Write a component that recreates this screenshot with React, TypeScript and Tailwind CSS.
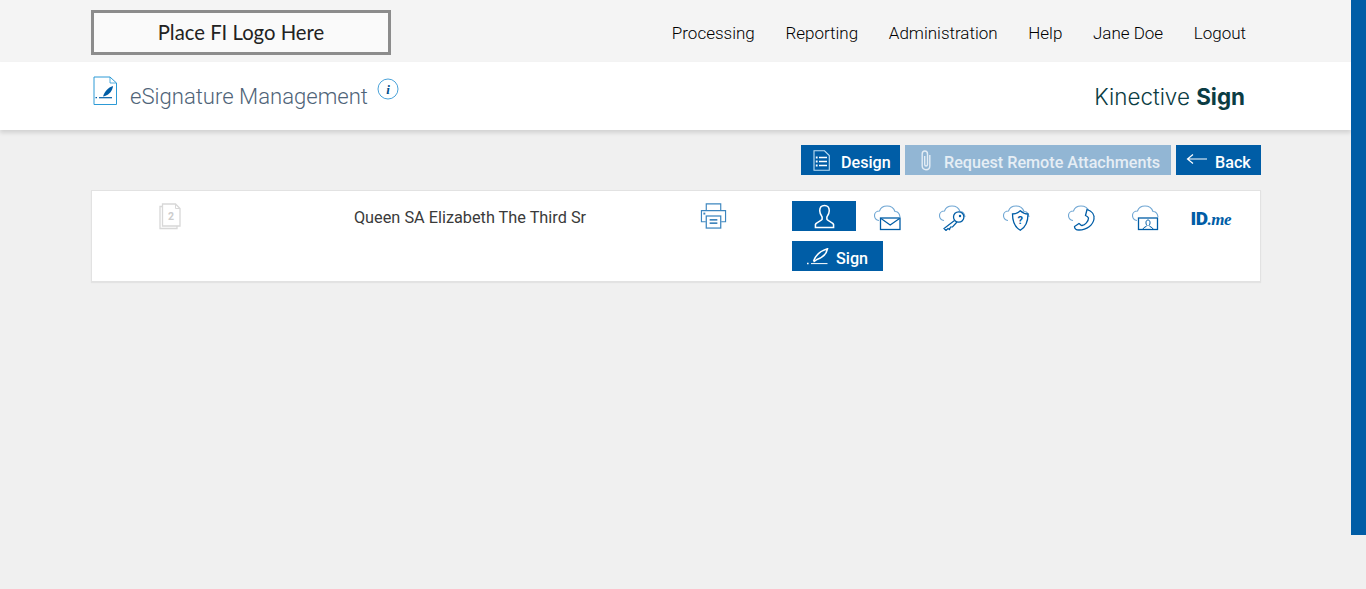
const navItems = ['Processing', 'Reporting', 'Administration', 'Help', 'Jane Doe', 'Logout'];

const BLUE = '#005DA6';

function SignDocIcon() {
  return (
    <svg width="26" height="30" viewBox="0 0 26 30" fill="none">
      <path d="M2 1H18L24.5 7V28.5H2Z" stroke="#2C9AD6" strokeWidth="1" />
      <path d="M18 1V7H24.5" stroke="#2C9AD6" strokeWidth="0.8" />
      <path d="M11 20.5C12.5 15.5 16 11.5 21 10C20.5 14.5 17.5 18.5 13 20Z" fill="#005DA6" />
      <path d="M7 21.7H20" stroke="#005DA6" strokeWidth="1.2" />
      <path d="M3.5 21.7H5" stroke="#005DA6" strokeWidth="1.2" />
    </svg>
  );
}

function DesignIcon() {
  return (
    <svg width="17" height="21" viewBox="0 0 17 21" fill="none" stroke="white">
      <path d="M1 .8H11.5L16.3 5.5V20.2H1Z" strokeWidth="1.1" stroke="#BFE0F5" />
      <path d="M6 7.5H14M6 11.5H14M6 15.5H14" strokeWidth="1.5" />
      <path d="M2.8 7.5H4.6M2.8 11.5H4.6M2.8 15.5H4.6" strokeWidth="1.8" />
    </svg>
  );
}

function ClipIcon() {
  return (
    <svg width="10" height="21" viewBox="0 0 10 21" fill="none" stroke="#E4EDF5" strokeWidth="1.4">
      <path d="M8.8 5V16C8.8 21 1.2 21 1.2 16V4C1.2 0 6.5 0 6.5 4V14.5C6.5 16.5 3.7 16.5 3.7 14.5V6" />
    </svg>
  );
}

function BackArrow() {
  return (
    <svg width="21" height="10" viewBox="0 0 21 10" fill="none" stroke="white" strokeWidth="1.2">
      <path d="M21 5H1.5M7 .5L1.5 5L7 9.5" />
    </svg>
  );
}

function PersonIcon() {
  return (
    <svg width="21" height="25" viewBox="0 0 22 26" fill="none" stroke="white" strokeWidth="1.6">
      <path d="M11 1.5C7.5 1.5 6 4 6 7C6 10 7.5 12 8.5 13.5V16C8 17.5 2.5 18.5 1.5 21.5V24.5H20.5V21.5C19.5 18.5 14 17.5 13.5 16V13.5C14.5 12 16 10 16 7C16 4 14.5 1.5 11 1.5Z" />
    </svg>
  );
}

function QuillIcon() {
  return (
    <svg width="23" height="17" viewBox="0 0 23 17" fill="none" stroke="white">
      <path d="M7.5 13C9.5 7.5 14 3 21.5 .8C20.5 6 16.5 9.5 11 11.5L7.5 14" strokeWidth="1.5" />
      <path d="M5 15.6H21.5" strokeWidth="1" />
      <path d="M1 15.6H2.6" strokeWidth="1.5" />
    </svg>
  );
}

// shared cloud outline, the overlay sits in the lower right of the 28x26 box
function Cloud() {
  return (
    <path
      d="M5 15.5C2 15.5 .5 13 .5 10.5C.5 8 2.5 6 5.5 6C6.5 3 9.5 1 13 1C17 1 20 3.5 21 6.5C23.5 6.5 25.5 8.5 26 12"
      stroke="#6FA6D3"
      strokeWidth="1.1"
      fill="none"
    />
  );
}

function CloudMail() {
  return (
    <svg width="28" height="26" viewBox="0 0 28 26" fill="none">
      <Cloud />
      <rect x="6.5" y="13" width="19.5" height="11.5" fill="white" stroke={BLUE} strokeWidth="1.3" />
      <path d="M7 13.5L16.2 20L25.5 13.5" stroke={BLUE} strokeWidth="1.2" />
    </svg>
  );
}

function CloudKey() {
  return (
    <svg width="28" height="26" viewBox="0 0 28 26" fill="none">
      <Cloud />
      <path d="M15.5 15.5L5 23.5L7 25.5L9 23.5L10.5 24.5L11.5 22L13.5 22L18 17" fill="white" stroke={BLUE} strokeWidth="1.2" />
      <circle cx="19.7" cy="12" r="5.2" fill="white" stroke={BLUE} strokeWidth="1.3" />
      <circle cx="21" cy="11" r="1.2" fill={BLUE} />
    </svg>
  );
}

function CloudShield() {
  return (
    <svg width="28" height="26" viewBox="0 0 28 26" fill="none">
      <Cloud />
      <path d="M9.5 9C13 9 15.5 7.5 17.3 5.8C19 7.5 21.5 9 25 9C25 16 23 22 17.3 25.3C11.5 22 9.5 16 9.5 9Z" fill="white" stroke={BLUE} strokeWidth="1.3" />
      <text x="17.3" y="19" textAnchor="middle" fontSize="11" fontWeight="700" fill={BLUE} fontFamily="Roboto, sans-serif">?</text>
    </svg>
  );
}

function CloudPhone() {
  return (
    <svg width="28" height="26" viewBox="0 0 28 26" fill="none">
      <Cloud />
      <path d="M19 4.5C24 6 26.5 10 26 14C25 20 19 25 11 25C8 25 6.5 23.5 6.5 21.5L11 18.5C12 19 13 20.5 14 20.5C17 20 20.5 16.5 20.5 13C20 12 18.5 11 17.5 10.5Z" fill="white" stroke={BLUE} strokeWidth="1.3" />
    </svg>
  );
}

function CloudVideo() {
  return (
    <svg width="28" height="26" viewBox="0 0 28 26" fill="none">
      <Cloud />
      <rect x="6.5" y="13" width="19" height="11.5" fill="white" stroke={BLUE} strokeWidth="1.3" />
      <path d="M11 24C11.5 22 14.5 22 15 20.5C13.5 19 13.5 15 16 15C18.5 15 18.5 19 17 20.5C17.5 22 20.5 22 21 24" stroke={BLUE} strokeWidth="1" />
    </svg>
  );
}

function PrinterIcon() {
  return (
    <svg width="27" height="28" viewBox="0 0 28 28" fill="none">
      <path d="M6.5 8V1.5H21.5V8" stroke="#3D86BF" strokeWidth="1.2" />
      <path d="M6 20H1.5V8.5H26.5V20H22" stroke="#3D86BF" strokeWidth="1.2" />
      <rect x="6.5" y="14" width="15" height="12.5" fill="white" stroke="#3D86BF" strokeWidth="1.3" />
      <path d="M10 18H18M10 21.5H18" stroke={BLUE} strokeWidth="1.3" />
      <rect x="3.5" y="10.5" width="2" height="2" fill="#3D86BF" />
    </svg>
  );
}

function PagesIcon() {
  return (
    <svg width="22" height="27" viewBox="0 0 22 27" fill="none" stroke="#D8D8D8">
      <path d="M3 3.5H1V25.5H18V23" strokeWidth="1.3" />
      <path d="M3.5 1H16.5L21 5.5V23H3.5Z" strokeWidth="1.3" fill="white" />
      <path d="M16.5 1V5.5H21" strokeWidth="1" />
      <text x="12" y="16.5" textAnchor="middle" fontSize="10.5" fontWeight="700" fill="#CCCCCC" stroke="none" fontFamily="Roboto, sans-serif">2</text>
    </svg>
  );
}

function InfoIcon() {
  return (
    <svg width="22" height="22" viewBox="0 0 22 22" fill="none">
      <circle cx="11" cy="11" r="10" stroke="#4BA3D9" strokeWidth="1" />
      <text x="11" y="15.5" textAnchor="middle" fontSize="13" fontWeight="700" fontStyle="italic" fill="#004E8C" fontFamily="'Liberation Serif', serif">i</text>
    </svg>
  );
}

const verifyIcons = [CloudMail, CloudKey, CloudShield, CloudPhone, CloudVideo];

export default function App() {
  return (
    <div className="flex min-h-[589px] bg-[#f0f0f0] font-['Roboto',sans-serif]">
      <div className="w-[1351px] shrink-0">
        <header className="flex h-[62px] items-start justify-between bg-[#f4f4f4] pl-[91px] pr-[105px] pt-[10px]">
          <div className="flex h-[45px] w-[300px] items-center justify-center border-[3px] border-[#8c8c8c] bg-[#fafafa] pb-[1px] font-['Lato',sans-serif] text-[20.3px] font-normal text-[#222]">
            Place FI Logo Here
          </div>
          <nav className="mt-[13px] flex gap-[30.6px] text-[17px] leading-[20px] font-light text-black">
            {navItems.map((item) => (
              <a key={item}>{item}</a>
            ))}
          </nav>
        </header>

        <div className="flex h-[68px] items-center justify-between bg-white pl-[91px] pr-[106px] pt-[2px] shadow-[0_3px_4px_rgba(0,0,0,0.12)]">
          <div className="flex items-start">
            <div className="-mt-[6px] ml-px">
              <SignDocIcon />
            </div>
            <h1 className="ml-[12px] -mt-[2px] text-[22.1px] leading-[32px] font-light text-[#4f6478]">eSignature Management</h1>
            <div className="ml-[9px] -mt-[4px]">
              <InfoIcon />
            </div>
          </div>
          <div className="font-['Inter',sans-serif] text-[22.4px] font-light text-[#0b3c43]">
            Kinective <span className="font-bold">Sign</span>
          </div>
        </div>

        <div className="ml-[91px] w-[1170px] pt-[15px]">
          <div className="flex justify-end gap-[5px]">
            <button className="flex h-[30px] w-[99px] items-center bg-[#005DA6] pl-[12px] text-[16.15px] font-medium text-white">
              <DesignIcon />
              <span className="ml-[11px] mt-[7px]">Design</span>
            </button>
            <button className="flex h-[30px] w-[266px] items-center bg-[#92B6D4] pl-[16px] text-[16.15px] font-medium text-[#e6eef5]">
              <ClipIcon />
              <span className="ml-[13px] mt-[7px]">Request Remote Attachments</span>
            </button>
            <button className="flex h-[30px] w-[85px] items-center bg-[#005DA6] pl-[10px] text-[16.15px] font-medium text-white">
              <span className="-mt-[2px]">
                <BackArrow />
              </span>
              <span className="ml-[8px] mt-[7px]">Back</span>
            </button>
          </div>

          <div className="mt-[15px] flex h-[92px] items-start border border-[#e2e2e2] bg-white shadow-[0_1px_1px_rgba(0,0,0,0.05)]">
            <div className="flex w-[156px] justify-center pt-[12px]">
              <PagesIcon />
            </div>
            <div className="w-[444px] pt-[17px] text-center text-[16.3px] leading-[20px] text-[#3a3a3a]">
              Queen SA Elizabeth The Third Sr
            </div>
            <div className="flex w-[42px] justify-center pt-[11px]">
              <PrinterIcon />
            </div>
            <div className="ml-[58px] pt-[10px]">
              <div className="flex h-[30px] items-center">
                <div className="flex h-[30px] w-[64px] items-center justify-center bg-[#005DA6]">
                  <PersonIcon />
                </div>
                {verifyIcons.map((Icon, i) => (
                  <div key={i} className="flex h-[30px] w-[64.5px] items-center justify-center pt-[4px]">
                    <Icon />
                  </div>
                ))}
                <div className="ml-[12px] mt-[4px] text-[19px] leading-none font-black tracking-[-0.5px] text-[#005DA6]">
                  ID<span className="font-['Liberation_Serif',serif] text-[17px] font-bold italic">.me</span>
                </div>
              </div>
              <button className="mt-[10px] flex h-[30px] w-[91px] items-center bg-[#005DA6] pl-[14px] text-[16.15px] font-medium text-white">
                <QuillIcon />
                <span className="ml-[7px] mt-[7px]">Sign</span>
              </button>
            </div>
          </div>
        </div>
      </div>
      <div className="h-[535px] w-[15px] bg-[#005DA6]" />
    </div>
  );
}
